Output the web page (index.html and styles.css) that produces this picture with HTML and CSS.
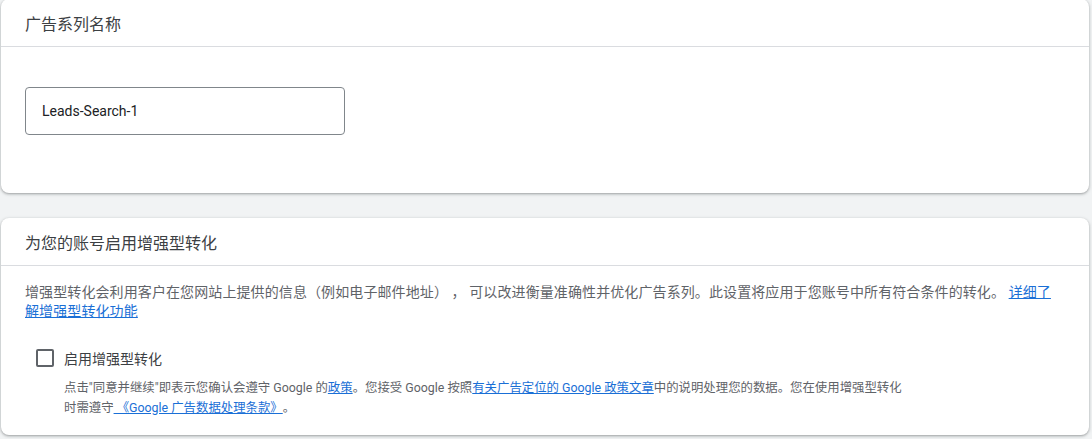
FILE: index.html
```html
<!DOCTYPE html>
<html lang="zh-CN">
<head>
<meta charset="utf-8">
<title>广告系列设置</title>
<link rel="stylesheet" href="styles.css">
</head>
<body>
<div class="page">
  <section class="card card-name">
    <header class="card-header">广告系列名称</header>
    <div class="card-body name-body">
      <div class="text-field">Leads-Search-1</div>
    </div>
  </section>

  <section class="card card-ec">
    <header class="card-header">为您的账号启用增强型转化</header>
    <div class="card-body ec-body">
      <p class="ec-desc">增强型转化会利用客户在您网站上提供的信息（例如电子邮件地址） ， 可以改进衡量准确性并优化广告系列。此设置将应用于您账号中所有符合条件的转化。 <a class="link learn" href="#">详细了解增强型转化功能</a></p>
      <label class="check-row">
        <span class="checkbox"></span>
        <span class="check-label">启用增强型转化</span>
      </label>
      <p class="terms">点击"同意并继续"即表示您确认会遵守 Google 的<a class="link tl" href="#">政策</a>。您接受 Google 按照<a class="link tl" href="#">有关广告定位的 Google 政策文章</a>中的说明处理您的数据。您在使用增强型转化时需遵守<a class="link tl" href="#">&nbsp;《Google 广告数据处理条款》</a>。</p>
    </div>
  </section>
</div>
</body>
</html>
```

FILE: styles.css
```css
html, body {
  margin: 0;
  padding: 0;
  background: #f1f3f4;
}

body {
  font-family: Roboto, "Noto Sans CJK SC", sans-serif;
  color: #3c4043;
  width: 1092px;
  height: 439px;
  overflow: hidden;
}

.page {
  display: flex;
  flex-direction: column;
  gap: 25px;
  padding: 0 3px 0 1px;
}

.card {
  background: #fff;
  border-radius: 8px;
  box-shadow: 0 1px 2px rgba(60, 64, 67, 0.3), 0 1px 3px 1px rgba(60, 64, 67, 0.15);
}

.card-name {
  margin-top: -1px;
}

.card-header {
  height: 47px;
  display: flex;
  align-items: center;
  padding-left: 24px;
  font-size: 16px;
  color: #3c4043;
  border-bottom: 1px solid #dadce0;
}

.name-body {
  padding: 40px 24px 58px;
}

.text-field {
  box-sizing: border-box;
  width: 320px;
  height: 48px;
  border: 1px solid #80868b;
  border-radius: 4px;
  display: flex;
  align-items: center;
  padding-left: 16px;
  font-size: 14px;
  color: #202124;
}

.ec-body {
  padding: 17px 32px 17px 24px;
}

.ec-desc {
  margin: 0;
  font-size: 14px;
  line-height: 19px;
  letter-spacing: 0.1px;
  color: #5f6368;
}

.link {
  color: #1a6fd6;
  text-decoration: underline;
}

.learn {
  margin-left: 0;
}

.check-row {
  display: flex;
  align-items: center;
  height: 40px;
  margin-top: 17px;
  padding-left: 11px;
  gap: 10px;
}

.checkbox {
  box-sizing: border-box;
  width: 18px;
  height: 18px;
  border: 2px solid #5f6368;
  border-radius: 2px;
}

.check-label {
  font-size: 14px;
  color: #3c4043;
}

.terms {
  margin: 0;
  padding-left: 39px;
  max-width: 842px;
  font-size: 12.4px;
  line-height: 20px;
  color: #5f6368;
}

.tl {
  display: inline-block;
  line-height: 20px;
}
```
